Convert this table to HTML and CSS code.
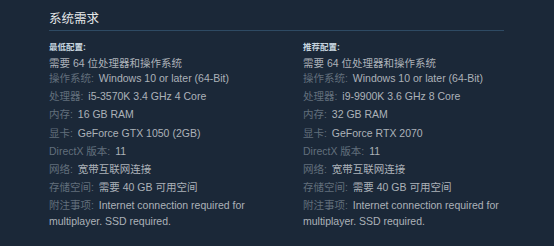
FILE: index.html
```html
<!DOCTYPE html>
<html lang="zh-CN">
<head>
<meta charset="utf-8">
<link rel="stylesheet" href="styles.css">
</head>
<body>
<div class="sysreq">
  <h2 class="heading">系统需求</h2>
  <div class="cols">
    <div class="col">
      <div class="title">最低配置:</div>
      <div class="req">需要 64 位处理器和操作系统</div>
      <ul class="list">
        <li><span class="lbl">操作系统:</span> Windows 10 or later (64-Bit)</li>
        <li><span class="lbl">处理器:</span> i5-3570K 3.4 GHz 4 Core</li>
        <li><span class="lbl">内存:</span> 16 GB RAM</li>
        <li><span class="lbl">显卡:</span> GeForce GTX 1050 (2GB)</li>
        <li><span class="lbl">DirectX 版本:</span> 11</li>
        <li><span class="lbl">网络:</span> 宽带互联网连接</li>
        <li><span class="lbl">存储空间:</span> 需要 40 GB 可用空间</li>
        <li><span class="lbl">附注事项:</span> Internet connection required for multiplayer. SSD required.</li>
      </ul>
    </div>
    <div class="col">
      <div class="title">推荐配置:</div>
      <div class="req">需要 64 位处理器和操作系统</div>
      <ul class="list">
        <li><span class="lbl">操作系统:</span> Windows 10 or later (64-Bit)</li>
        <li><span class="lbl">处理器:</span> i9-9900K 3.6 GHz 8 Core</li>
        <li><span class="lbl">内存:</span> 32 GB RAM</li>
        <li><span class="lbl">显卡:</span> GeForce RTX 2070</li>
        <li><span class="lbl">DirectX 版本:</span> 11</li>
        <li><span class="lbl">网络:</span> 宽带互联网连接</li>
        <li><span class="lbl">存储空间:</span> 需要 40 GB 可用空间</li>
        <li><span class="lbl">附注事项:</span> Internet connection required for multiplayer. SSD required.</li>
      </ul>
    </div>
  </div>
</div>
</body>
</html>
```

FILE: styles.css
```css
html, body {
  margin: 0;
  padding: 0;
  background: #1b2838;
  width: 554px;
  height: 246px;
  overflow: hidden;
}
body {
  font-family: "Liberation Sans", "Noto Sans CJK SC", sans-serif;
  color: #acb2b8;
}
.sysreq {
  padding: 12px 0 0 49px;
  width: 455px;
}
.heading {
  margin: 0;
  font-size: 12.5px;
  font-weight: normal;
  color: #e5e7e8;
  line-height: 15px;
  padding-bottom: 3px;
  border-bottom: 1px solid #2e4a63;
}
.cols {
  display: grid;
  grid-template-columns: 230px 230px;
  column-gap: 24px;
  margin-top: 10px;
}
.title {
  font-size: 8.5px;
  font-weight: bold;
  color: #c6d4df;
  line-height: 12px;
  margin-bottom: 2px;
}
.req {
  font-size: 10.5px;
  line-height: 16px;
}
.list {
  list-style: none;
  margin: -1px 0 0;
  padding: 0;
  font-size: 10.5px;
  line-height: 16px;
}
.list li {
  margin-bottom: 2.2px;
}
.lbl {
  color: #626f7c;
  margin-right: 2px;
}
```
